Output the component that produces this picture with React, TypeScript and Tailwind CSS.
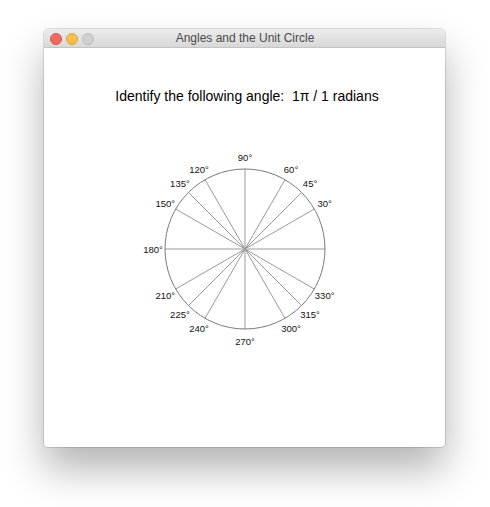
const LABELS = [30, 45, 60, 90, 120, 135, 150, 180, 210, 225, 240, 270, 300, 315, 330];
const SPOKES = [0, 30, 45, 60, 90, 120, 135, 150];

const C = 110;
const R = 80;
const LR = 92;

function UnitCircle() {
  return (
    <svg width="220" height="220" viewBox="0 0 220 220" className="block">
      {SPOKES.map((a) => {
        const t = (a * Math.PI) / 180;
        const dx = R * Math.cos(t);
        const dy = R * Math.sin(t);
        return (
          <line
            key={a}
            x1={C - dx}
            y1={C + dy}
            x2={C + dx}
            y2={C - dy}
            stroke="#9a9a9a"
            strokeWidth="1"
          />
        );
      })}
      <circle cx={C} cy={C} r={R} fill="none" stroke="#7a7a7a" strokeWidth="1" />
      {LABELS.map((a) => {
        const t = (a * Math.PI) / 180;
        return (
          <text
            key={a}
            x={C + LR * Math.cos(t)}
            y={C - LR * Math.sin(t)}
            textAnchor="middle"
            dominantBaseline="central"
            fontSize="9.5"
            fill="#111"
            fontFamily="'Liberation Sans', Arial, sans-serif"
          >
            {a}°
          </text>
        );
      })}
    </svg>
  );
}

export default function App() {
  return (
    <div className="w-[490px] h-[507px] bg-white overflow-hidden pt-[29px] pl-[44px] font-['Liberation_Sans',Arial,sans-serif]">
      <div className="w-[401px] h-[418px] bg-white rounded-t-[5px] rounded-b-[4px] shadow-[0_0_0_1px_rgba(0,0,0,0.12),0_22px_40px_rgba(0,0,0,0.3)] flex flex-col overflow-hidden">
        {/* title bar */}
        <div className="relative h-[19px] flex items-center bg-gradient-to-b from-[#ececec] to-[#d8d8d8] border-b border-[#c4c4c4]">
          <div className="flex gap-[4px] pl-[6px] pt-[2px]">
            <span className="w-[12px] h-[12px] rounded-full bg-[#ed6a5e] border border-[#d9574b]" />
            <span className="w-[12px] h-[12px] rounded-full bg-[#f5bf4f] border border-[#dea63a]" />
            <span className="w-[12px] h-[12px] rounded-full bg-[#cfcfcf] border border-[#bdbdbd]" />
          </div>
          <div className="absolute inset-0 flex items-center justify-center pl-[1px] text-[12px] text-[#4a4a4a]">
            Angles and the Unit Circle
          </div>
        </div>

        {/* content */}
        <div className="flex-1 flex flex-col items-center pt-[40px]">
          <p className="pl-[5px] text-[14px] leading-[16px] text-black whitespace-pre">
            Identify the following angle:  1π / 1 radians
          </p>
          <div className="mt-[35px]">
            <UnitCircle />
          </div>
        </div>
      </div>
    </div>
  );
}
